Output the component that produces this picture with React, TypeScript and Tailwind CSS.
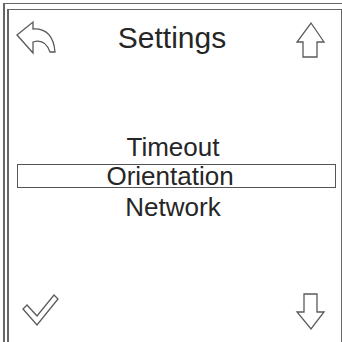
import React from "react";

const STROKE = "#5a5a5a";

const BackIcon = () => (
  <svg width="42" height="36" viewBox="0 0 42 36" className="block">
    <path
      d="M2 15 L18 2 L18 9 Q38 8 40 32 L35 32 Q30 18 18 22 L18 33 Z"
      fill="none"
      stroke={STROKE}
      strokeWidth="1.3"
      strokeLinejoin="miter"
    />
  </svg>
);

const UpIcon = () => (
  <svg width="31" height="38" viewBox="0 0 31 38" className="block">
    <path d="M16 2 L29 21 L22 21 L22 36 L8 36 L8 21 L2 21 Z" fill="none" stroke={STROKE} strokeWidth="1.3" />
  </svg>
);

const DownIcon = () => (
  <svg width="31" height="39" viewBox="0 0 31 39" className="block">
    <path d="M9 2 L22 2 L22 20 L29 20 L16 37 L2 20 L9 20 Z" fill="none" stroke={STROKE} strokeWidth="1.3" />
  </svg>
);

const CheckIcon = () => (
  <svg width="40" height="36" viewBox="0 0 40 36" className="block">
    <path d="M3 17 L17 33 L38 7 L34 3 L17 24 L7 13 Z" fill="none" stroke={STROKE} strokeWidth="1.3" />
  </svg>
);

const ITEMS = ["Timeout", "Orientation", "Network"];

export default function App() {
  const selected = 1;

  return (
    <div
      className="h-[342px] w-[342px] overflow-hidden bg-white pl-[3px] pt-[3px] text-[#262626]"
      style={{ fontFamily: '"Liberation Sans", Arial, sans-serif' }}
    >
      <div className="h-full border-l-2 border-t-[1.5px] border-[#666] pl-[2px] pt-[5px]">
        <div className="flex h-full flex-col border-l-2 border-r-[1.5px] border-t border-[#666]">
          <div className="mt-[10px] flex items-start">
            <div className="ml-[6px]">
              <BackIcon />
            </div>
            <div className="mt-[3px] flex-1 pr-[8px] text-center text-[30px] leading-[30px]">Settings</div>
            <div className="mr-[15px] mt-[1px]">
              <UpIcon />
            </div>
          </div>

          <div className="mt-[75px] flex flex-col">
            {ITEMS.map((item, i) =>
              i === selected ? (
                <div
                  key={item}
                  className="ml-[8px] mr-[5px] border border-[#555] pr-[13px] text-center text-[26px] leading-[22px]"
                >
                  {item}
                </div>
              ) : (
                <div
                  key={item}
                  className={`pr-[4px] text-center text-[26px] leading-[26px] ${i < selected ? "mb-[4px]" : "mt-[6px]"}`}
                >
                  {item}
                </div>
              )
            )}
          </div>

          <div className="mt-auto flex items-end justify-between pb-[11px]">
            <div className="mb-[3px] ml-[11px]">
              <CheckIcon />
            </div>
            <div className="mr-[15px]">
              <DownIcon />
            </div>
          </div>
        </div>
      </div>
    </div>
  );
}
